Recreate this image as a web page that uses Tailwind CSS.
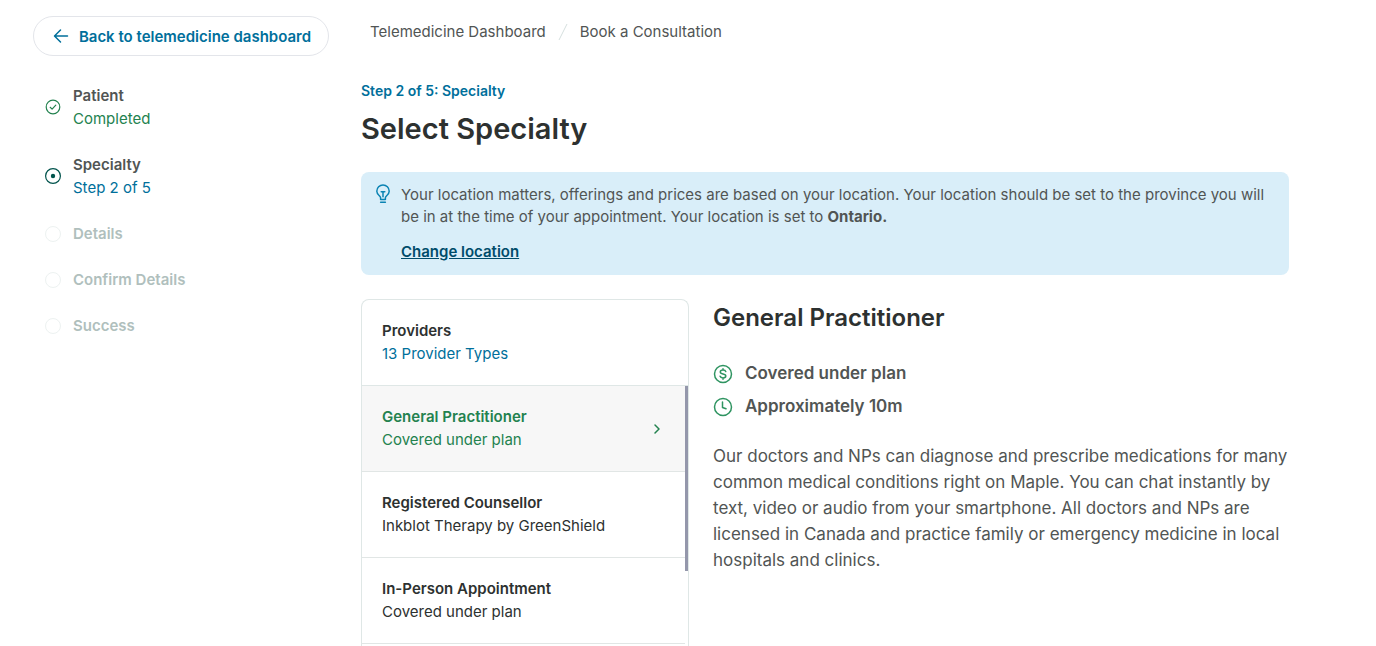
<!DOCTYPE html>
<html lang="en">
<head>
  <meta charset="UTF-8" />
  <meta name="viewport" content="width=device-width, initial-scale=1" />
  <title>Select Specialty</title>
  <script src="https://cdn.jsdelivr.net/npm/@tailwindcss/browser@4"></script>
</head>

<body class="bg-white font-['Inter','Liberation_Sans',sans-serif] text-[15px] leading-[23px] text-[#515554]">
  <div class="flex min-h-screen gap-8 pl-[33px] pr-[87px]">

    <aside class="w-[296px] shrink-0 pt-4">
      <a href="#" class="flex h-10 items-center justify-center gap-2 rounded-full border border-[#e3e5ea] font-semibold text-[#006f9b] whitespace-nowrap">
        <svg class="size-5" viewBox="0 0 20 20" fill="none" stroke="currentColor" stroke-width="1.5" stroke-linecap="round" stroke-linejoin="round"><path d="M16.500 10H4M9.500 4L3.500 10l6 6" /></svg>
        Back to telemedicine dashboard
      </a>

      <ol class="mt-7 flex flex-col gap-[23px] pl-3">
        <li class="flex items-center gap-3">
          <svg class="size-4 shrink-0 text-[#23824f]" viewBox="0 0 16 16" fill="none" stroke="currentColor" stroke-linecap="round" stroke-linejoin="round"><circle cx="8" cy="8" r="6.800" stroke-width="1.200" /><path d="M5.200 8.300l1.900 1.800 3.700-3.900" stroke-width="1.200" /></svg>
          <div>
            <p class="font-semibold">Patient</p>
            <p class="text-[#23824f]">Completed</p>
          </div>
        </li>
        <li class="flex items-center gap-3">
          <svg class="size-4 shrink-0 text-[#00534c]" viewBox="0 0 16 16" fill="none" stroke="currentColor"><circle cx="8" cy="8" r="7.400" stroke-width="1.200" /><circle cx="8" cy="8" r="2.200" fill="currentColor" stroke="none" /></svg>
          <div>
            <p class="font-semibold">Specialty</p>
            <p class="text-[#006f9b]">Step 2 of 5</p>
          </div>
        </li>
        <li class="flex items-center gap-3">
          <span class="size-4 shrink-0 rounded-full border border-[#edf2f1]"></span>
          <p class="font-semibold text-[#b0bfbd]">Details</p>
        </li>
        <li class="flex items-center gap-3">
          <span class="size-4 shrink-0 rounded-full border border-[#edf2f1]"></span>
          <p class="font-semibold text-[#b0bfbd]">Confirm Details</p>
        </li>
        <li class="flex items-center gap-3">
          <span class="size-4 shrink-0 rounded-full border border-[#edf2f1]"></span>
          <p class="font-semibold text-[#b0bfbd]">Success</p>
        </li>
      </ol>
    </aside>

    <main class="flex min-w-0 flex-1 flex-col pt-5">
      <nav aria-label="Breadcrumb" class="flex items-center gap-3 pl-[9px] leading-6">
        <a href="#">Telemedicine Dashboard</a>
        <svg class="h-4 w-[10px]" viewBox="0 0 10 16" fill="none" stroke="#d5dfde"><path d="M1 16L9 0" /></svg>
        <a href="#">Book a Consultation</a>
      </nav>

      <p class="mt-[35px] text-sm font-semibold leading-6 text-[#006f9b]">Step 2 of 5: Specialty</p>
      <h1 class="mt-[7px] text-[29px] font-semibold leading-[38px] text-[#2d3130]">Select Specialty</h1>

      <section class="mt-6 flex gap-2 rounded-lg bg-[#d9eef9] py-3 pl-3 pr-5">
        <svg class="size-5 shrink-0 text-[#0a83b3]" viewBox="0 0 20 20" fill="none" stroke="currentColor" stroke-width="1.500" stroke-linecap="round" stroke-linejoin="round"><path d="M7.600 15.600v-1.800c0-.8-.6-1.400-1.500-2.300A6 6 0 0 1 3.800 7.200a6.200 6.200 0 0 1 12.400 0 6 6 0 0 1-2.300 4.300c-.9.900-1.500 1.500-1.500 2.300v1.800zM10 12.800V7.800M8.200 7.800h3.600M7.600 18.300h4.800" /></svg>
        <div class="leading-[22px]">
          <p>Your location matters, offerings and prices are based on your location. Your location should be set to the province you will be in at the time of your appointment. Your location is set to <strong class="font-bold">Ontario.</strong></p>
          <a href="#" class="mt-[13px] inline-block font-semibold text-[#004c6b] underline">Change location</a>
        </div>
      </section>

      <div class="mt-6 flex flex-1 gap-6">
        <section class="relative w-[328px] shrink-0 rounded-t-lg border border-b-0 border-[#dfe7e6] text-[#2d3130]">
          <header class="border-b border-[#dfe7e6] px-5 pt-[19px] pb-5">
            <h2 class="font-semibold">Providers</h2>
            <p class="text-[#006f9b]">13 Provider Types</p>
          </header>
          <ul class="mr-[3px]">
            <li class="border-b border-[#e1e6e5] bg-[#f7f7f7]">
              <button type="button" class="flex w-full items-center justify-between pl-5 pr-[18px] pt-[19px] pb-5 text-left text-[#23824f]">
                <span>
                  <span class="block font-semibold">General Practitioner</span>
                  <span class="block">Covered under plan</span>
                </span>
                <svg class="size-5" viewBox="0 0 20 20" fill="none" stroke="currentColor" stroke-width="1.500" stroke-linecap="round" stroke-linejoin="round"><path d="M8 7l4 4-4 4" /></svg>
              </button>
            </li>
            <li class="border-b border-[#e1e6e5]">
              <button type="button" class="block w-full px-5 pt-[19px] pb-5 text-left">
                <span class="block font-semibold">Registered Counsellor</span>
                <span class="block">Inkblot Therapy by GreenShield</span>
              </button>
            </li>
            <li class="border-b border-[#e1e6e5]">
              <button type="button" class="block w-full px-5 pt-[19px] pb-5 text-left">
                <span class="block font-semibold">In-Person Appointment</span>
                <span class="block">Covered under plan</span>
              </button>
            </li>
          </ul>
          <!-- scroll thumb -->
          <div class="absolute right-0 top-[86px] h-[185px] w-[3px] bg-[#9497ab]"></div>
        </section>

        <section class="min-w-0 flex-1">
          <h2 class="text-2xl font-semibold leading-[38px] text-[#2d3130]">General Practitioner</h2>
          <ul class="mt-6 flex flex-col gap-2 text-[17px] font-semibold leading-[25px]">
            <li class="flex items-center gap-3">
              <svg class="size-5 shrink-0 text-[#2f9461]" viewBox="0 0 20 20" fill="none" stroke="currentColor" stroke-width="1.500" stroke-linecap="round" stroke-linejoin="round"><circle cx="10" cy="10" r="8.500" /><path d="M12.800 7.600c-.3-1-1.300-1.500-2.800-1.500-1.600 0-2.700.7-2.700 1.900 0 2.700 5.500 1.200 5.500 4 0 1.200-1.200 1.900-2.800 1.900-1.500 0-2.600-.6-2.900-1.600M10 4.800v1.300M10 13.900v1.300" /></svg>
              Covered under plan
            </li>
            <li class="flex items-center gap-3">
              <svg class="size-5 shrink-0 text-[#2f9461]" viewBox="0 0 20 20" fill="none" stroke="currentColor" stroke-width="1.500" stroke-linecap="round" stroke-linejoin="round"><circle cx="10" cy="10" r="8.500" /><path d="M9.500 5v5.500l3.500 1.300" /></svg>
              Approximately 10m
            </li>
          </ul>
          <p class="mt-6 text-[17px] leading-[26px]">Our doctors and NPs can diagnose and prescribe medications for many common medical conditions right on Maple. You can chat instantly by text, video or audio from your smartphone. All doctors and NPs are licensed in Canada and practice family or emergency medicine in local hospitals and clinics.</p>
        </section>
      </div>
    </main>
  </div>
</body>
</html>
